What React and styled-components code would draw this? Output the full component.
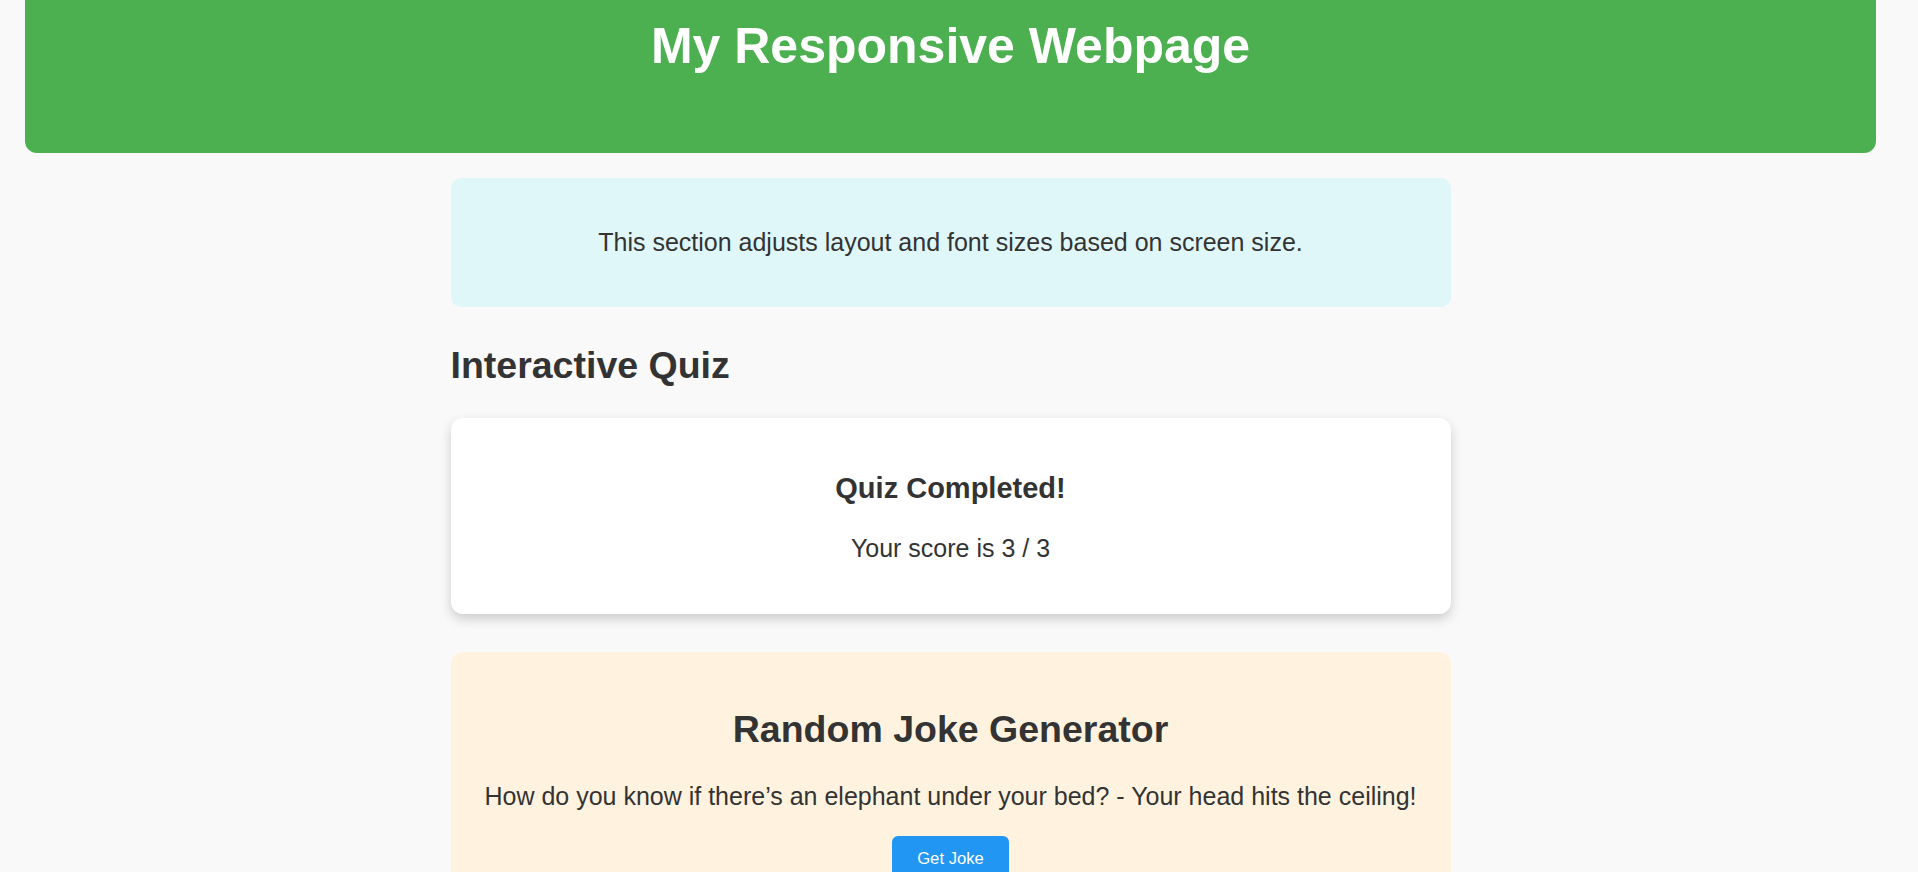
import React, { useEffect } from 'react'
import styled, { createGlobalStyle } from 'styled-components'

const GlobalStyle = createGlobalStyle`
    html, body {
        margin: 0;
        padding: 0;
        background-color: #f9f9f9;
    }
    body {
        font-family: "Liberation Sans", Arial, sans-serif;
        color: #333;
    }
`;

const App = () => {
    // the reference is photographed a little way down the page
    useEffect(() => {
        window.scrollTo(0, 99)
    }, [])

    return (
        <Page>
            <GlobalStyle />
            <Header>
                <h1>My Responsive Webpage</h1>
            </Header>

            <Main>
                <InfoBox>
                    <p>This section adjusts layout and font sizes based on screen size.</p>
                </InfoBox>

                <SectionTitle>Interactive Quiz</SectionTitle>

                <QuizCard>
                    <h3>Quiz Completed!</h3>
                    <p>Your score is 3 / 3</p>
                </QuizCard>

                <JokeCard>
                    <h2>Random Joke Generator</h2>
                    <p>How do you know if there’s an elephant under your bed? - Your head hits the ceiling!</p>
                    <JokeButton>Get Joke</JokeButton>
                </JokeCard>
            </Main>
        </Page>
    )
}

// right side keeps room for the 17px scrollbar of the reference browser
const Page = styled.div`
    padding: 37px 42px 34px 25px;
`;

const Header = styled.header`
    background-color: #4caf50;
    color: #fff;
    text-align: center;
    padding: 45px 25px;
    border-radius: 12px;
    margin-bottom: 25px;

    h1 {
        margin: 33.5px 0;
        font-size: 50px;
        font-weight: 700;
    }
`;

const Main = styled.main`
    max-width: 1000px;
    margin: 0 auto;
`;

const InfoBox = styled.section`
    background-color: #e0f7fa;
    border-radius: 10px;
    padding: 25px;
    text-align: center;

    p {
        margin: 25px 0;
        font-size: 25px;
    }
`;

const SectionTitle = styled.h2`
    font-size: 37.5px;
    font-weight: 700;
    margin: 37px 0 31px;
`;

const QuizCard = styled.div`
    background-color: #fff;
    border-radius: 12px;
    padding: 25px 25px 26px;
    text-align: center;
    box-shadow: 0 5px 12px rgba(0, 0, 0, 0.18);
    margin-bottom: 38px;

    h3 {
        font-size: 29px;
        margin: 29px 0;
    }
    p {
        font-size: 25px;
        margin: 25px 0;
    }
`;

const JokeCard = styled.section`
    background-color: #fff3e0;
    border-radius: 12px;
    padding: 25px;
    text-align: center;

    h2 {
        font-size: 37.5px;
        margin: 31px 0 31px;
    }
    p {
        font-size: 25px;
        margin: 25px 0;
    }
`;

const JokeButton = styled.button`
    background-color: #2196f3;
    color: #fff;
    border: none;
    border-radius: 6px;
    padding: 12.5px 25px;
    font-family: "Liberation Sans", Arial, sans-serif;
    font-size: 16.67px;
    cursor: pointer;
`;

export default App
